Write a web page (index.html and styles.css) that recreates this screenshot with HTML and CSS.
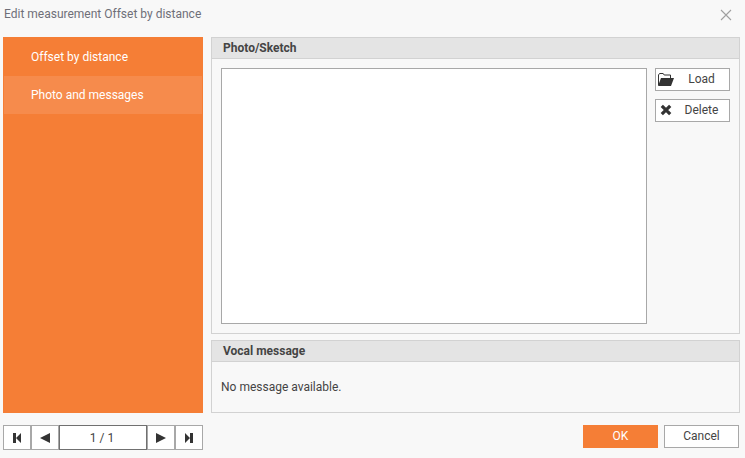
FILE: index.html
```html
<!DOCTYPE html>
<html lang="en">
<head>
    <meta charset="UTF-8">
    <title>Edit measurement</title>
    <link rel="stylesheet" href="styles.css">
</head>
<body>
    <div class="dialog">
        <div class="title-bar">
            <span class="title">Edit measurement Offset by distance</span>
            <svg class="close" width="12" height="12" viewBox="0 0 12 12"><path d="M1 1l10 10M11 1L1 11" stroke="#a0a0a0" stroke-width="1.100" fill="none"/></svg>
        </div>
        <div class="main">
            <ul class="side-menu">
                <li>Offset by distance</li>
                <li class="active">Photo and messages</li>
            </ul>
            <div class="content">
                <section class="panel panel-photo">
                    <h2>Photo/Sketch</h2>
                    <div class="photo-body">
                        <div class="photo-box"></div>
                        <div class="photo-actions">
                            <button type="button" class="btn-side btn-load">
                                <svg width="16" height="13" viewBox="0 0 16 13"><path d="M.5 12V2L1.500.5h3.700l1 1.500h6.300v3" stroke="#333" stroke-width="1" fill="none"/><path d="M0 13l3-8h13l-3 8z" fill="#333"/></svg>
                                <span>Load</span>
                            </button>
                            <button type="button" class="btn-side btn-delete">
                                <svg width="12" height="12" viewBox="0 0 12 12"><path d="M1.800 1.800l8.400 8.400M10.200 1.800l-8.400 8.400" stroke="#333" stroke-width="3.200" fill="none"/></svg>
                                <span>Delete</span>
                            </button>
                        </div>
                    </div>
                </section>
                <section class="panel panel-vocal">
                    <h2>Vocal message</h2>
                    <p>No message available.</p>
                </section>
            </div>
        </div>
        <div class="footer">
            <div class="pager">
                <button type="button" class="btn-page"><svg width="8" height="10" viewBox="0 0 8 10"><path d="M0 0h3v10H0zM3 5l5-5v10z" fill="#333"/></svg></button>
                <button type="button" class="btn-page"><svg width="10" height="10" viewBox="0 0 10 10"><path d="M0 5l10-5v10z" fill="#333"/></svg></button>
                <div class="page-num">1 / 1</div>
                <button type="button" class="btn-page"><svg width="10" height="10" viewBox="0 0 10 10"><path d="M10 5L0 0v10z" fill="#333"/></svg></button>
                <button type="button" class="btn-page"><svg width="8" height="10" viewBox="0 0 8 10"><path d="M8 0H5v10h3zM5 5L0 0v10z" fill="#333"/></svg></button>
            </div>
            <div class="dialog-actions">
                <button type="button" class="btn-ok">OK</button>
                <button type="button" class="btn-cancel">Cancel</button>
            </div>
        </div>
    </div>
</body>
</html>
```

FILE: styles.css
```css
html, body { margin: 0; padding: 0; }
body { background-color: #f8f8f8; color: #444; font-family: Roboto, sans-serif; font-size: 12px; }
button { font-family: Roboto, sans-serif; font-size: 12px; color: #444; cursor: pointer; padding: 0; }

.dialog { width: 745px; height: 458px; box-sizing: border-box; padding: 0 5px 8px 3px; display: flex; flex-direction: column; overflow: hidden; }

.title-bar { height: 37px; flex: none; display: flex; align-items: flex-start; justify-content: space-between; }
.title { color: #6f6f78; margin: 6px 0 0 1px; line-height: 16px; }
.close { margin: 9px 8px 0 0; }

.main { height: 376px; flex: none; display: flex; gap: 8px; }
.side-menu { width: 200px; flex: none; margin: 0; padding: 1px 1px 0; box-sizing: border-box; list-style: none; background-color: #f57e36; color: #fff; }
.side-menu li { height: 38px; line-height: 38px; padding-left: 27px; }
.side-menu li.active { background-color: #f68b4c; }

.content { flex: 1; display: flex; flex-direction: column; gap: 6px; }
.panel { border: 1px solid #d2d2d2; box-sizing: border-box; }
.panel h2 { margin: 0; height: 21px; line-height: 20px; box-sizing: border-box; padding-left: 11px; font-size: 12px; font-weight: 700; color: #444; background-color: #e4e4e4; border-bottom: 1px solid #d2d2d2; }
.panel-photo { height: 297px; }
.panel-vocal { height: 73px; }
.panel-vocal p { margin: 0; padding: 17px 0 0 9px; line-height: 16px; }

.photo-body { display: flex; gap: 8px; padding: 9px 0 0 9px; }
.photo-box { width: 426px; height: 256px; box-sizing: border-box; background-color: #fff; border: 1px solid #a8a8a8; }
.photo-actions { display: flex; flex-direction: column; gap: 8px; }
.btn-side { position: relative; width: 75px; height: 23px; box-sizing: border-box; padding-bottom: 2px; background-color: #fff; border: 1px solid #a8a8a8; display: flex; align-items: center; }
.btn-side svg { position: absolute; }
.btn-load svg { left: 2px; top: 4px; }
.btn-delete svg { left: 4px; top: 4px; }
.btn-side span { flex: 1; padding-left: 18px; text-align: center; }

.footer { height: 25px; flex: none; margin-top: 12px; display: flex; justify-content: space-between; }
.pager { display: flex; width: 200px; height: 25px; }
.btn-page { width: 28px; height: 25px; box-sizing: border-box; background-color: #fff; border: 1px solid #a8a8a8; display: flex; align-items: center; justify-content: center; }
.page-num { width: 88px; box-sizing: border-box; padding-right: 2px; background-color: #fff; border: 1px solid #707070; text-align: center; line-height: 24px; }

.dialog-actions { display: flex; gap: 6px; margin-right: 1px; }
.dialog-actions button { width: 75px; height: 23px; box-sizing: border-box; padding-bottom: 2px; }
.btn-ok { background-color: #f57e36; border: none; color: #fff; }
.btn-cancel { background-color: #fff; border: 1px solid #a8a8a8; }
```
